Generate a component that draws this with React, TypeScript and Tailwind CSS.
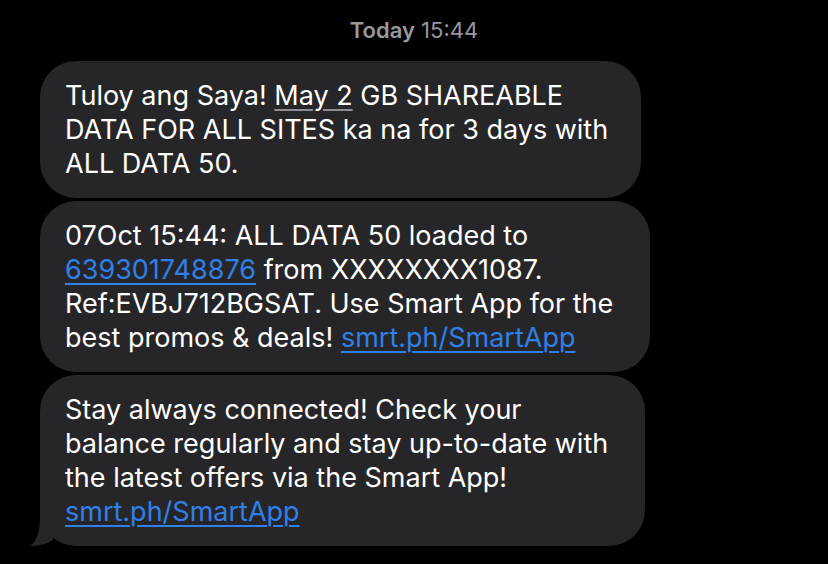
import React from "react";

function Link({ children }: { children: React.ReactNode }) {
  return <span className="text-[#3080ea] underline decoration-[1.5px] underline-offset-[4px]">{children}</span>;
}

function Bubble({ width, tail, children }: { width: string; tail?: boolean; children: React.ReactNode }) {
  return (
    <div className={`relative rounded-[36px] bg-[#262628] pl-[25px] pr-[16px] pt-[18px] pb-[17px] ${width}`}>
      {tail && (
        <svg className="absolute -left-[10px] bottom-0" width="30" height="36" viewBox="0 0 30 36">
          <path d="M10 0 L10 6 C10 22 7 31 0 36 C9 36 16 34 23 30 L27 0 Z" fill="#262628" />
        </svg>
      )}
      <div className="whitespace-nowrap text-[27px] leading-[34px] text-white">{children}</div>
    </div>
  );
}

export default function App() {
  return (
    <div className="h-[564px] w-[828px] overflow-hidden bg-black" style={{ fontFamily: "Inter, 'Liberation Sans', sans-serif" }}>
      <div className="pt-[16px] text-center text-[22px] leading-[28px] text-[#98989e]">
        <span className="font-semibold">Today</span> 15:44
      </div>
      <div className="mt-[17px] flex flex-col gap-[3px] pl-[40px]">
        <Bubble width="w-[601px]">
          <div>
            Tuloy ang Saya! <span className="underline decoration-[#8e8e93] decoration-[1.5px] underline-offset-[4px]">May 2</span> GB SHAREABLE
          </div>
          <div>DATA FOR ALL SITES ka na for 3 days with</div>
          <div>ALL DATA 50.</div>
        </Bubble>
        <Bubble width="w-[610px]">
          <div>07Oct 15:44: ALL DATA 50 loaded to</div>
          <div>
            <Link>639301748876</Link> from XXXXXXXX1087.
          </div>
          <div>Ref:EVBJ712BGSAT. Use Smart App for the</div>
          <div>
            best promos &amp; deals! <Link>smrt.ph/SmartApp</Link>
          </div>
        </Bubble>
        <Bubble width="w-[605px]" tail>
          <div>Stay always connected! Check your</div>
          <div>balance regularly and stay up-to-date with</div>
          <div>the latest offers via the Smart App!</div>
          <div>
            <Link>smrt.ph/SmartApp</Link>
          </div>
        </Bubble>
      </div>
    </div>
  );
}
